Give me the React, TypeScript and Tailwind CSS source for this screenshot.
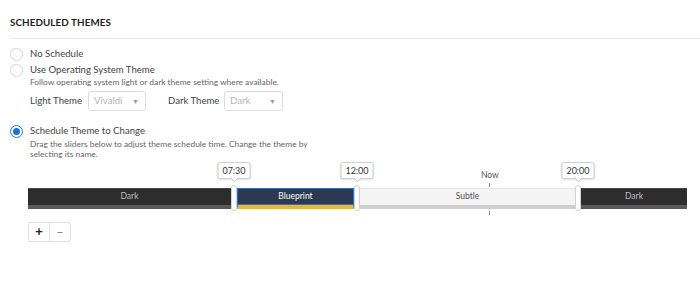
const font = { fontFamily: 'Lato, "Noto Sans", sans-serif' }

function Radio({ checked }: { checked?: boolean }) {
  return (
    <span
      className={
        'w-[13px] h-[13px] rounded-full border flex items-center justify-center shrink-0 ' +
        (checked ? 'border-[#1a73e8] bg-white' : 'border-[#d4d4d4] bg-white')
      }
    >
      {checked && <span className="w-[7px] h-[7px] rounded-full bg-[#1a6fdc]" />}
    </span>
  )
}

function Select({ value, width }: { value: string; width: string }) {
  return (
    <div
      className={`${width} h-[20px] shrink-0 border border-[#dcdcdc] rounded-[3px] flex items-center justify-between pl-[5px] pr-[6px] text-[#b5b5b5]`}
    >
      <span>{value}</span>
      <span className="text-[7px] text-[#9a9a9a]">▼</span>
    </div>
  )
}

function Handle({ label }: { label: string }) {
  return (
    <div className="relative w-[6px] shrink-0 flex justify-center">
      <div className="w-[6px] h-[26px] -my-[2px] rounded-[3px] bg-white border border-[#d0d0d0]" />
      <div className="absolute bottom-[28px] left-1/2 -translate-x-1/2 flex flex-col items-center">
        <div className="w-[33px] text-center h-[17px] leading-[16px] bg-white border border-[#cfcfcf] rounded-[2px] shadow-[0_1px_2px_rgba(0,0,0,0.12)] text-[9px] text-[#333]">
          {label}
        </div>
        <div className="w-[6px] h-[6px] bg-white border-r border-b border-[#cfcfcf] rotate-45 -mt-[4px]" />
      </div>
    </div>
  )
}

function Segment({ label, width, kind }: { label: string; width: string; kind: 'dark' | 'blue' | 'light' }) {
  const styles = {
    dark: 'bg-[#2d2d2d] text-[#bdbdbd] border-b-[4px] border-[#5a5a5a] border-t border-t-[#444]',
    blue: 'bg-[#2b3a52] text-white border border-[#1a73e8] border-b-[4px] border-b-[#f5b51f] shadow-[inset_0_-1px_0_#1a73e8]',
    light: 'bg-[#f4f4f4] text-[#555] border-b-[4px] border-[#cfcfcf] border-t border-t-[#e6e6e6]',
  }[kind]
  return (
    <div className={`${width} h-[21px] shrink-0 flex items-center justify-center text-[8.5px] ${styles}`}>
      {label}
    </div>
  )
}

export default function App() {
  return (
    <div className="w-[700px] h-[282px] bg-white text-[#333] text-[9.6px] overflow-hidden" style={font}>
      <div className="pl-[10px] pt-[16px]">
        <h2 className="text-[9.8px] font-bold tracking-[0.1px] text-[#222] leading-[13px]">SCHEDULED THEMES</h2>
        <div className="mt-[9px] border-t border-[#e8e8e8]" />
      </div>

      <div className="pl-[10px] pt-[8px] space-y-[1px]">
        <label className="flex items-center gap-[7px] h-[15px]">
          <Radio />
          <span className="text-[#444]">No Schedule</span>
        </label>
        <div>
          <label className="flex items-center gap-[7px] h-[15px]">
            <Radio />
            <span className="text-[#444]">Use Operating System Theme</span>
          </label>
          <p className="pl-[20px] text-[8.4px] leading-[9px] text-[#666]">
            Follow operating system light or dark theme setting where available.
          </p>
          <div className="pl-[20px] mt-[4px] flex items-center whitespace-nowrap">
            <span className="text-[#444] w-[58px] shrink-0">Light Theme</span>
            <Select value="Vivaldi" width="w-[58px]" />
            <span className="text-[#444] ml-[22px] w-[56px] shrink-0">Dark Theme</span>
            <Select value="Dark" width="w-[59px]" />
          </div>
        </div>
      </div>

      <div className="pl-[10px] mt-[13px]">
        <label className="flex items-center gap-[7px] h-[15px]">
          <Radio checked />
          <span className="text-[#444]">Schedule Theme to Change</span>
        </label>
        <p className="pl-[20px] w-[310px] text-[8.4px] leading-[10px] text-[#666]">
          Drag the sliders below to adjust theme schedule time. Change the theme by selecting its name.
        </p>
      </div>

      <div className="pl-[28px] mt-[28px] relative">
        <div className="flex items-center">
          <Segment label="Dark" width="w-[203px]" kind="dark" />
          <Handle label="07:30" />
          <Segment label="Blueprint" width="w-[117px]" kind="blue" />
          <Handle label="12:00" />
          <div className="relative">
            <Segment label="Subtle" width="w-[215px]" kind="light" />
            <div className="absolute left-[121px] -top-[18px] flex flex-col items-center">
              <span className="text-[8.5px] text-[#555] leading-[11px]">Now</span>
              <span className="w-px h-[4px] bg-[#888] mt-[2px]" />
            </div>
            <span className="absolute left-[129px] -bottom-[6px] w-px h-[4px] bg-[#888]" />
          </div>
          <Handle label="20:00" />
          <Segment label="Dark" width="w-[106px]" kind="dark" />
        </div>
      </div>

      <div className="pl-[28px] mt-[13px]">
        <div className="inline-flex h-[20px] border border-[#dcdcdc] rounded-[3px] bg-white">
          <button className="w-[21px] flex items-center justify-center text-[13px] font-bold text-[#222] border-r border-[#dcdcdc]">
            +
          </button>
          <button className="w-[20px] flex items-center justify-center text-[12px] text-[#777]">−</button>
        </div>
      </div>
    </div>
  )
}
